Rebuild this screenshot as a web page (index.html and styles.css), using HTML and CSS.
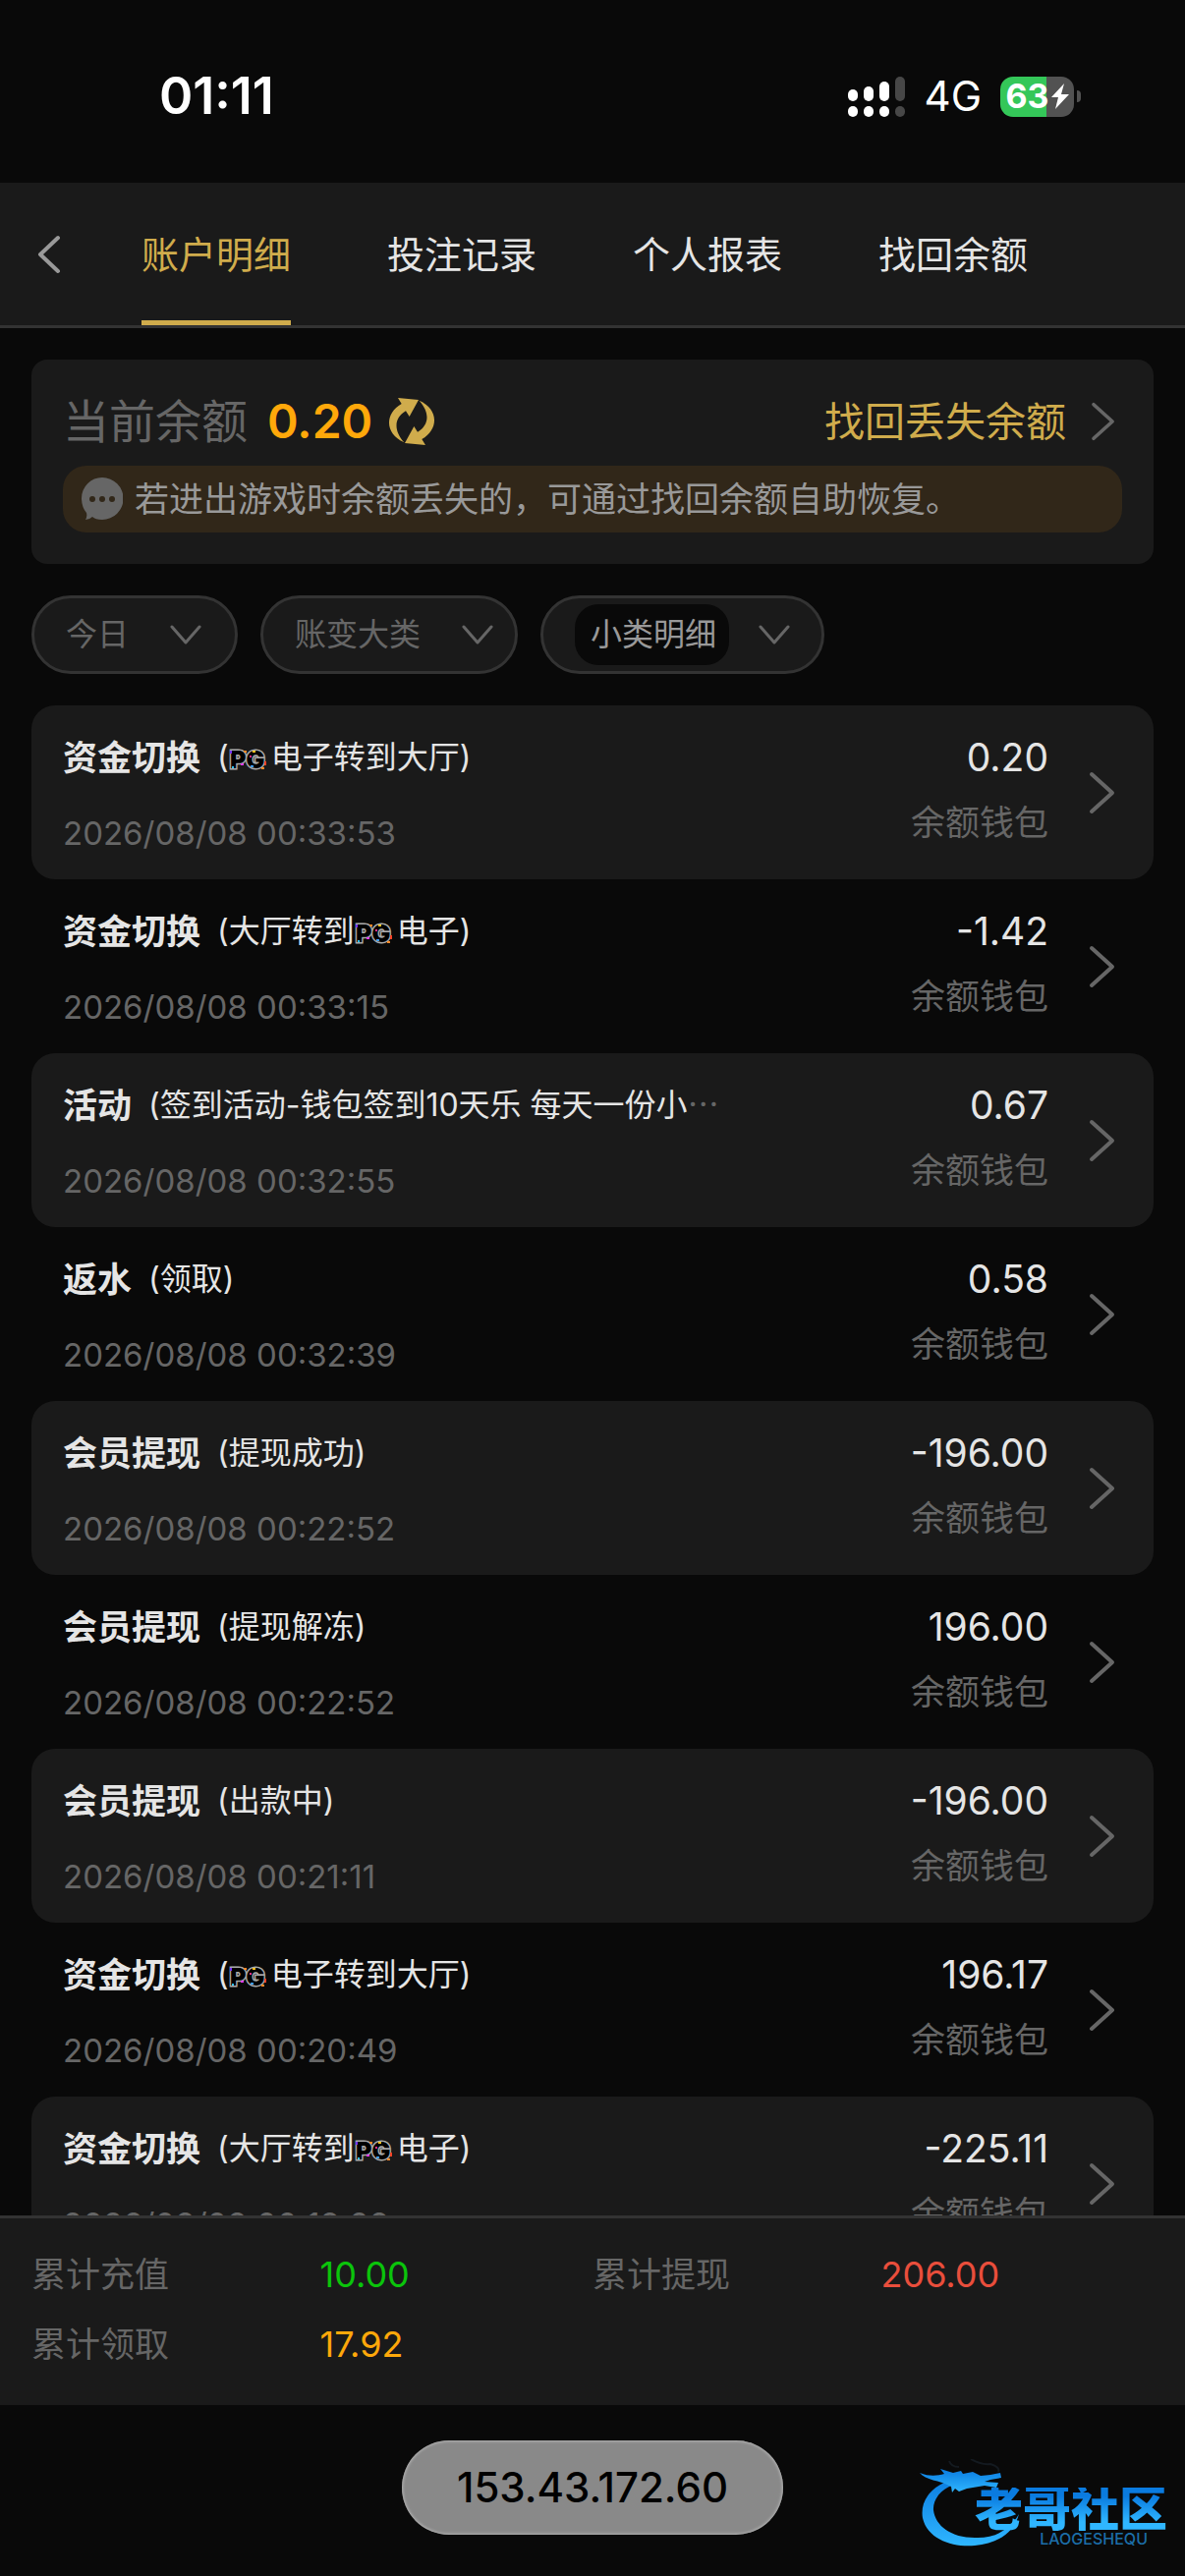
FILE: index.html
```html
<!DOCTYPE html>
<html lang="zh-CN">
<head>
  <meta charset="UTF-8" />
  <meta name="viewport" content="width=device-width, initial-scale=1.0" />
  <title>账户明细</title>
  <link rel="stylesheet" href="styles.css">
</head>
<body>
  <!-- shared icons -->
  <svg class="sprite" aria-hidden="true">
    <symbol id="icon-right" viewBox="0 0 28 44">
      <path d="M3 3 L24 22 L3 41" fill="none" stroke="currentColor" stroke-width="4" stroke-linecap="round" stroke-linejoin="round" />
    </symbol>
    <symbol id="icon-down" viewBox="0 0 32 20">
      <path d="M2 2 L16 18 L30 2" fill="none" stroke="currentColor" stroke-width="3" stroke-linecap="round" stroke-linejoin="round" />
    </symbol>
    <symbol id="icon-pg" viewBox="0 0 40 24">
      <text class="pg-text" x="1" y="21">PG</text>
      <rect x="1" y="3" width="2" height="3" fill="#7a35ff" />
      <rect x="15" y="3" width="3" height="2" fill="#ff8a2a" />
      <rect x="3" y="19" width="2" height="2" fill="#2fc4ff" />
      <rect x="12" y="16" width="3" height="2" fill="#e03cf0" />
      <rect x="24" y="3" width="3" height="2" fill="#ffc21f" />
      <rect x="21" y="8" width="2" height="2" fill="#ff2f86" />
      <rect x="22" y="18" width="3" height="2" fill="#3f9dff" />
      <rect x="36" y="14" width="2" height="4" fill="#ff4326" />
      <rect x="33" y="20" width="3" height="2" fill="#ff8a2a" />
    </symbol>
  </svg>

  <div class="status-bar">
    <span class="time">01:11</span>
    <div class="status-icons">
      <svg class="signal" viewBox="0 0 58 41" aria-hidden="true">
        <g fill="#fff">
          <rect x="0" y="13" width="10" height="12" rx="5" />
          <rect x="16" y="10" width="10" height="15" rx="5" />
          <rect x="32" y="5" width="10" height="20" rx="5" />
          <rect x="0" y="30" width="10" height="11" rx="5" />
          <rect x="16" y="30" width="10" height="11" rx="5" />
          <rect x="32" y="30" width="10" height="11" rx="5" />
        </g>
        <g fill="#474747">
          <rect x="48" y="0" width="10" height="25" rx="5" />
          <rect x="48" y="30" width="10" height="11" rx="5" />
        </g>
      </svg>
      <span class="network">4G</span>
      <span class="battery">
        <span class="battery-body">63<svg class="bolt" viewBox="0 0 18 26" aria-hidden="true"><path d="M13 0 L0 14 H7 L4 26 L18 11 H10 Z" fill="#fff" /></svg></span>
        <span class="battery-tip"></span>
      </span>
    </div>
  </div>

  <nav class="tabs">
    <a class="back" href="#" aria-label="返回">
      <svg viewBox="0 0 24 40"><path d="M21 3 L3 20 L21 37" fill="none" stroke="currentColor" stroke-width="4" stroke-linecap="round" stroke-linejoin="round" /></svg>
    </a>
    <a class="tab active" href="#">账户明细</a>
    <a class="tab" href="#">投注记录</a>
    <a class="tab" href="#">个人报表</a>
    <a class="tab" href="#">找回余额</a>
  </nav>

  <section class="balance-card">
    <div class="balance-row">
      <span class="balance-label">当前余额</span>
      <span class="balance-value">0.20</span>
      <button class="refresh" type="button" aria-label="刷新">
        <svg viewBox="15 21 144 150">
          <path d="M45 24 L108 30 L80 81 L69 64 C34 84 30 122 64 160 C4 134 4 72 56 42 Z" fill="currentColor" />
          <path d="M45 24 L108 30 L80 81 L69 64 C34 84 30 122 64 160 C4 134 4 72 56 42 Z" fill="currentColor" transform="rotate(180 87 96)" />
        </svg>
      </button>
      <a class="recover" href="#">找回丢失余额<svg class="recover-arrow"><use href="#icon-right" /></svg></a>
    </div>
    <p class="notice">
      <svg class="bubble" viewBox="0 0 42 44" aria-hidden="true">
        <path d="M21 0 A21 21 0 0 1 21 43 Q14 43 11 40 Q8 43 4 43 Q6 40 5 36 Q0 30 0 21 A21 21 0 0 1 21 0 Z" fill="#666" />
        <g fill="#312719">
          <circle cx="11" cy="22" r="3" />
          <circle cx="21" cy="22" r="3" />
          <circle cx="31" cy="22" r="3" />
        </g>
      </svg>
      若进出游戏时余额丢失的，可通过找回余额自助恢复。
    </p>
  </section>

  <form class="filters">
    <label class="filter">
      <select aria-label="日期"><option>今日</option></select>
      <svg class="filter-arrow"><use href="#icon-down" /></svg>
    </label>
    <label class="filter">
      <select aria-label="账变大类"><option>账变大类</option></select>
      <svg class="filter-arrow"><use href="#icon-down" /></svg>
    </label>
    <label class="filter filter-sub">
      <select class="chip" aria-label="小类明细"><option>小类明细</option></select>
      <svg class="filter-arrow"><use href="#icon-down" /></svg>
    </label>
  </form>

  <ul class="records">
    <li>
      <a class="record" href="#">
        <div class="record-main">
          <div class="record-title"><strong>资金切换</strong><span>(<svg class="pg" role="img" aria-label="PG"><use href="#icon-pg" /></svg>电子转到大厅)</span></div>
          <time>2026/08/08 00:33:53</time>
        </div>
        <div class="record-side"><span class="amount">0.20</span><span class="wallet">余额钱包</span></div>
        <svg class="record-arrow"><use href="#icon-right" /></svg>
      </a>
    </li>
    <li>
      <a class="record" href="#">
        <div class="record-main">
          <div class="record-title"><strong>资金切换</strong><span>(大厅转到<svg class="pg" role="img" aria-label="PG"><use href="#icon-pg" /></svg>电子)</span></div>
          <time>2026/08/08 00:33:15</time>
        </div>
        <div class="record-side"><span class="amount">-1.42</span><span class="wallet">余额钱包</span></div>
        <svg class="record-arrow"><use href="#icon-right" /></svg>
      </a>
    </li>
    <li>
      <a class="record" href="#">
        <div class="record-main">
          <div class="record-title"><strong>活动</strong><span>(签到活动-钱包签到10天乐 每天一份小<i class="more">⋯</i></span></div>
          <time>2026/08/08 00:32:55</time>
        </div>
        <div class="record-side"><span class="amount">0.67</span><span class="wallet">余额钱包</span></div>
        <svg class="record-arrow"><use href="#icon-right" /></svg>
      </a>
    </li>
    <li>
      <a class="record" href="#">
        <div class="record-main">
          <div class="record-title"><strong>返水</strong><span>(领取)</span></div>
          <time>2026/08/08 00:32:39</time>
        </div>
        <div class="record-side"><span class="amount">0.58</span><span class="wallet">余额钱包</span></div>
        <svg class="record-arrow"><use href="#icon-right" /></svg>
      </a>
    </li>
    <li>
      <a class="record" href="#">
        <div class="record-main">
          <div class="record-title"><strong>会员提现</strong><span>(提现成功)</span></div>
          <time>2026/08/08 00:22:52</time>
        </div>
        <div class="record-side"><span class="amount">-196.00</span><span class="wallet">余额钱包</span></div>
        <svg class="record-arrow"><use href="#icon-right" /></svg>
      </a>
    </li>
    <li>
      <a class="record" href="#">
        <div class="record-main">
          <div class="record-title"><strong>会员提现</strong><span>(提现解冻)</span></div>
          <time>2026/08/08 00:22:52</time>
        </div>
        <div class="record-side"><span class="amount">196.00</span><span class="wallet">余额钱包</span></div>
        <svg class="record-arrow"><use href="#icon-right" /></svg>
      </a>
    </li>
    <li>
      <a class="record" href="#">
        <div class="record-main">
          <div class="record-title"><strong>会员提现</strong><span>(出款中)</span></div>
          <time>2026/08/08 00:21:11</time>
        </div>
        <div class="record-side"><span class="amount">-196.00</span><span class="wallet">余额钱包</span></div>
        <svg class="record-arrow"><use href="#icon-right" /></svg>
      </a>
    </li>
    <li>
      <a class="record" href="#">
        <div class="record-main">
          <div class="record-title"><strong>资金切换</strong><span>(<svg class="pg" role="img" aria-label="PG"><use href="#icon-pg" /></svg>电子转到大厅)</span></div>
          <time>2026/08/08 00:20:49</time>
        </div>
        <div class="record-side"><span class="amount">196.17</span><span class="wallet">余额钱包</span></div>
        <svg class="record-arrow"><use href="#icon-right" /></svg>
      </a>
    </li>
    <li>
      <a class="record" href="#">
        <div class="record-main">
          <div class="record-title"><strong>资金切换</strong><span>(大厅转到<svg class="pg" role="img" aria-label="PG"><use href="#icon-pg" /></svg>电子)</span></div>
          <time>2026/08/08 00:19:28</time>
        </div>
        <div class="record-side"><span class="amount">-225.11</span><span class="wallet">余额钱包</span></div>
        <svg class="record-arrow"><use href="#icon-right" /></svg>
      </a>
    </li>
  </ul>

  <dl class="summary">
    <dt>累计充值</dt>
    <dd class="green">10.00</dd>
    <dt>累计提现</dt>
    <dd class="red">206.00</dd>
    <dt>累计领取</dt>
    <dd class="orange">17.92</dd>
  </dl>

  <footer class="bottom-bar">
    <span class="address">153.43.172.60</span>
    <div class="brand">
      <svg class="brand-ring" viewBox="0 0 104 92" aria-hidden="true">
        <defs>
          <linearGradient id="blue" x1="0" y1="0" x2="0" y2="1">
            <stop offset="0" stop-color="#0a7be0" />
            <stop offset="1" stop-color="#2fb6ff" />
          </linearGradient>
        </defs>
        <g fill="url(#blue)">
          <path d="M44 18 C12 24 0 42 3 60 C8 82 34 90 56 88 C78 86 96 76 101 56 C90 74 74 81 56 80 C32 80 16 68 14 52 C13 38 26 26 48 22 Z" />
          <path d="M0 14 C10 18 18 17 25 15 L21 10 L34 14 L42 12 L44 15 L54 13 L62 17 L72 16 L82 14 L83 19 L72 21 L66 23 L80 24 L78 29 L66 27 L54 29 L48 30 L40 33 L36 30 L33 34 L32 28 C20 21 6 22 0 14 Z" />
        </g>
        <path d="M30 2 Q32 8 40 8 M52 0 Q62 6 72 5 Q82 8 80 13" fill="none" stroke="#141a20" stroke-width="2" />
      </svg>
      <span class="brand-name">老哥社区</span>
      <span class="brand-latin">LAOGESHEQU</span>
    </div>
  </footer>
</body>
</html>
```
FILE: styles.css
```css
:root {
  --bg: #090909;
  --panel: #1a1a1a;
  --line: #333333;
  --muted: #666666;
  --soft: #999999;
  --text: #e5e5e5;
  --gold: #d0ac4c;
  --orange: #ffa80a;
}

* {
  box-sizing: border-box;
  margin: 0;
  padding: 0;
}

body {
  display: flex;
  flex-direction: column;
  height: 100vh;
  overflow: hidden;
  background: var(--bg);
  color: var(--text);
  font-family: Inter, "Noto Sans CJK SC", sans-serif;
  font-size: 35px;
  line-height: 42px;
}

a {
  color: inherit;
  text-decoration: none;
}

svg {
  display: block;
  flex-shrink: 0;
}

.sprite {
  display: none;
}

/* status bar */
.status-bar {
  display: flex;
  justify-content: space-between;
  align-items: center;
  height: 186px;
  padding: 10px 106px 0 162px;
  color: #fff;
}

.time {
  font-size: 52px;
  font-weight: 600;
}

.status-icons {
  display: flex;
  align-items: center;
}

.signal {
  width: 58px;
  height: 41px;
  margin-right: 20px;
}

.network {
  margin-right: 19px;
  font-size: 42px;
}

.battery {
  display: flex;
  align-items: center;
  gap: 3px;
}

.battery-body {
  display: flex;
  align-items: center;
  justify-content: center;
  gap: 2px;
  width: 75px;
  height: 41px;
  border-radius: 13px;
  background: linear-gradient(90deg, #34c759 63%, #525252 63%);
  font-size: 34px;
  font-weight: 700;
}

.bolt {
  width: 18px;
  height: 26px;
}

.battery-tip {
  width: 4px;
  height: 12px;
  border-radius: 0 4px 4px 0;
  background: #525252;
}

/* tabs */
.tabs {
  display: flex;
  align-items: stretch;
  gap: 98px;
  height: 148px;
  padding-left: 38px;
  background: var(--panel);
  border-bottom: 3px solid var(--line);
}

.back {
  display: flex;
  align-items: center;
  width: 24px;
  margin-right: -16px;
  color: var(--soft);
}

.back svg {
  width: 24px;
  height: 40px;
}

.tab {
  display: flex;
  align-items: center;
  padding-top: 5px;
  border-bottom: 5px solid transparent;
  font-size: 38px;
}

.tab.active {
  color: var(--gold);
  border-image: linear-gradient(var(--gold), var(--gold)) 1;
}

/* balance */
.balance-card {
  margin: 32px 32px 0;
  padding: 32px;
  border-radius: 16px;
  background: var(--panel);
}

.balance-row {
  display: flex;
  align-items: center;
  height: 62px;
  margin-bottom: 14px;
}

.balance-label {
  color: var(--muted);
  font-size: 47px;
}

.balance-value {
  margin: 0 16px 0 20px;
  color: var(--orange);
  font-size: 48px;
  font-weight: 600;
}

.refresh {
  border: none;
  background: none;
  color: var(--gold);
  cursor: pointer;
}

.refresh svg {
  width: 48px;
  height: 50px;
}

.recover {
  display: flex;
  align-items: center;
  gap: 24px;
  margin-left: auto;
  color: var(--gold);
  font-size: 41px;
}

.recover-arrow {
  width: 28px;
  height: 40px;
  margin-right: 5px;
  color: var(--muted);
}

.notice {
  display: flex;
  align-items: center;
  gap: 12px;
  height: 68px;
  padding: 0 19px;
  border-radius: 24px;
  background: #312719;
  color: var(--soft);
}

.bubble {
  width: 42px;
  height: 44px;
}

/* filters */
.filters {
  display: flex;
  gap: 23px;
  margin: 32px 32px 0;
}

.filter {
  display: flex;
  align-items: center;
  gap: 41px;
  height: 80px;
  padding: 0 22px 0 32px;
  border: 3px solid var(--line);
  border-radius: 40px;
  background: var(--panel);
  color: var(--muted);
}

.filter:first-child {
  padding-right: 34px;
}

.filter select {
  appearance: none;
  border: none;
  background: none;
  color: inherit;
  font-family: inherit;
  font-size: 32px;
  line-height: 42px;
}

.filter.filter-sub {
  gap: 30px;
  padding: 0 32px;
}

.filter .chip {
  height: 62px;
  padding: 0 12px 0 16px;
  border-radius: 24px;
  background: var(--bg);
  color: var(--soft);
}

.filter-arrow {
  width: 32px;
  height: 20px;
}

/* records */
.records {
  flex: 1;
  min-height: 0;
  margin: 32px 32px 0;
  overflow: hidden;
  list-style: none;
}

.records li:nth-child(odd) {
  border-radius: 24px;
  background: var(--panel);
}

.record {
  display: flex;
  height: 177px;
  padding: 32px 38px 0 32px;
}

.record-main {
  display: flex;
  flex-direction: column;
  flex: 1;
  gap: 35px;
  min-width: 0;
}

.record-title {
  display: flex;
  gap: 17px;
  white-space: nowrap;
}

.record-title span {
  font-size: 32px;
}

.pg {
  display: inline-block;
  width: 40px;
  height: 24px;
  margin-right: 3px;
  vertical-align: middle;
}

.pg-text {
  fill: #000;
  stroke: #aaa;
  stroke-width: 3px;
  paint-order: stroke;
  font: 900 25px Inter, sans-serif;
}

.more {
  color: var(--muted);
  font-style: normal;
}

time {
  color: var(--muted);
  font-size: 33px;
}

.record-side {
  display: flex;
  flex-direction: column;
  align-items: flex-end;
  gap: 24px;
}

.amount {
  font-size: 39px;
}

.wallet {
  color: var(--muted);
}

.record-arrow {
  width: 28px;
  height: 44px;
  margin: 35px 0 0 41px;
  color: var(--muted);
}

/* totals */
.summary {
  display: grid;
  grid-template-columns: repeat(4, 1fr);
  row-gap: 29px;
  padding: 36px 32px 41px;
  background: var(--panel);
  border-top: 3px solid var(--line);
}

.summary dt {
  color: var(--muted);
}

.summary dd {
  padding-left: 8px;
  font-size: 36px;
}

.green {
  color: #0bc40b;
}

.red {
  color: #e94e3c;
}

.orange {
  color: var(--orange);
}

/* bottom bar */
.bottom-bar {
  position: relative;
  display: flex;
  justify-content: center;
  align-items: center;
  height: 174px;
  padding-bottom: 6px;
}

.address {
  display: flex;
  align-items: center;
  height: 96px;
  padding: 0 56px;
  border-radius: 48px;
  background: #898989;
  box-shadow: inset 0 0 3px 1px #b4b4b4;
  color: #000;
  font-size: 42px;
  font-weight: 500;
}

.brand {
  position: absolute;
  right: 18px;
  bottom: 30px;
  display: flex;
  flex-direction: column;
  align-items: flex-end;
  padding-top: 29px;
}

.brand-ring {
  position: absolute;
  left: -56px;
  top: 0;
  width: 104px;
  height: 92px;
}

.brand-name {
  position: relative;
  background: linear-gradient(#0a7be0 20%, #2fb6ff 80%);
  background-clip: text;
  color: transparent;
  font-size: 49px;
  font-weight: 900;
  line-height: 44px;
}

.brand-latin {
  position: relative;
  padding-right: 20px;
  color: #1c6ea8;
  font-size: 16px;
  font-weight: 500;
  line-height: 16px;
}
```
